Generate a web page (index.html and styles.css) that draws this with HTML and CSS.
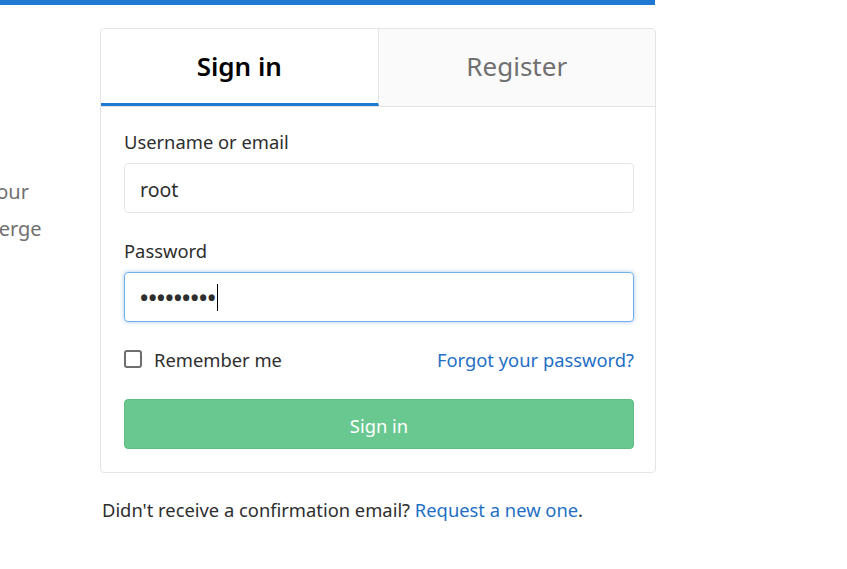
FILE: index.html
```html
<!DOCTYPE html>
<html lang="en">
<head>
<meta charset="utf-8">
<title>Sign in</title>
<link rel="stylesheet" href="styles.css">
</head>
<body>
<div class="page">
  <div class="topbar"></div>
  <div class="layout">
    <div class="intro">
      <p class="intro-text"><span class="l1">your</span><span class="l2">merge</span></p>
    </div>
    <div class="column">
      <div class="card">
        <div class="tabs">
          <div class="tab active">Sign in</div>
          <div class="tab">Register</div>
        </div>
        <div class="card-body">
          <label class="label">Username or email</label>
          <div class="input">root</div>
          <label class="label pw-label">Password</label>
          <div class="input focused"><span class="dots">•••••••••</span><span class="caret"></span></div>
          <div class="row">
            <label class="remember"><span class="checkbox"></span>Remember me</label>
            <a class="link" href="#">Forgot your password?</a>
          </div>
          <div class="btn">Sign in</div>
        </div>
      </div>
      <p class="confirm">Didn't receive a confirmation email? <a class="link" href="#">Request a new one</a>.</p>
    </div>
  </div>
</div>
</body>
</html>
```
FILE: styles.css
```css
* { box-sizing: border-box; }
html, body { margin: 0; padding: 0; background: #fff; }
body {
  font-family: "Noto Sans", "Open Sans", sans-serif;
  font-size: 18.35px;
  color: #2e2e2e;
}
.page { width: 847px; height: 569px; overflow: hidden; }
.topbar { width: 655px; height: 5px; background: #1f78d1; }
.layout { display: flex; }
.intro { width: 100px; overflow: hidden; }
.intro-text {
  margin: 168px 0 0 0;
  color: #707070;
  font-size: 20px;
  line-height: 37px;
}
.intro-text span { display: block; white-space: nowrap; }
.intro-text .l1 { margin-left: -14px; }
.intro-text .l2 { margin-left: -20px; }
.column { width: 556px; padding-top: 23px; }
.card {
  border: 1px solid #e5e5e5;
  border-radius: 4px;
  overflow: hidden;
}
.tabs { display: flex; border-bottom: 1px solid #e5e5e5; }
.tab {
  flex: 1;
  height: 77px;
  display: flex;
  align-items: center;
  justify-content: center;
  font-size: 26px;
  color: #707070;
  background: #fafafa;
  border-bottom: 3px solid transparent;
}
.tab.active {
  color: #000;
  font-weight: 600;
  background: #fff;
  border-bottom-color: #1f78d1;
  border-right: 1px solid #e5e5e5;
}
.card-body { padding: 21px 21px 23px 23px; display: flex; flex-direction: column; }
.label { display: block; line-height: 28px; margin-bottom: 7px; }
.pw-label { margin-top: 24px; }
.input {
  height: 50px;
  border: 1px solid #e5e5e5;
  border-radius: 4px;
  padding: 0 15px;
  display: flex;
  align-items: center;
  font-size: 19.5px;
  padding-top: 3px;
}
.input.focused {
  border-color: #73afea;
  box-shadow: 0 0 4px rgba(31, 120, 209, 0.4);
  padding-top: 0;
}
.dots { letter-spacing: 0.15px; font-size: 22px; font-weight: 700; line-height: 1; }
.caret { width: 1px; height: 27px; background: #000; margin-left: 1px; }
.row {
  display: flex;
  justify-content: space-between;
  align-items: center;
  margin-top: 23px;
  height: 28px;
}
.remember { display: flex; align-items: center; }
.checkbox {
  width: 18px;
  height: 18px;
  border: 2px solid #6e6e6e;
  border-radius: 3px;
  margin-right: 12px;
}
.link { color: #1f6fc5; text-decoration: none; }
.btn {
  margin-top: 26px;
  height: 50px;
  border-radius: 4px;
  background: #69c890;
  border: 1px solid #5fbd86;
  color: #fff;
  display: flex;
  align-items: center;
  justify-content: center;
  padding-top: 2px;
}
.confirm { margin: 23px 0 0 2px; line-height: 28px; }
```
